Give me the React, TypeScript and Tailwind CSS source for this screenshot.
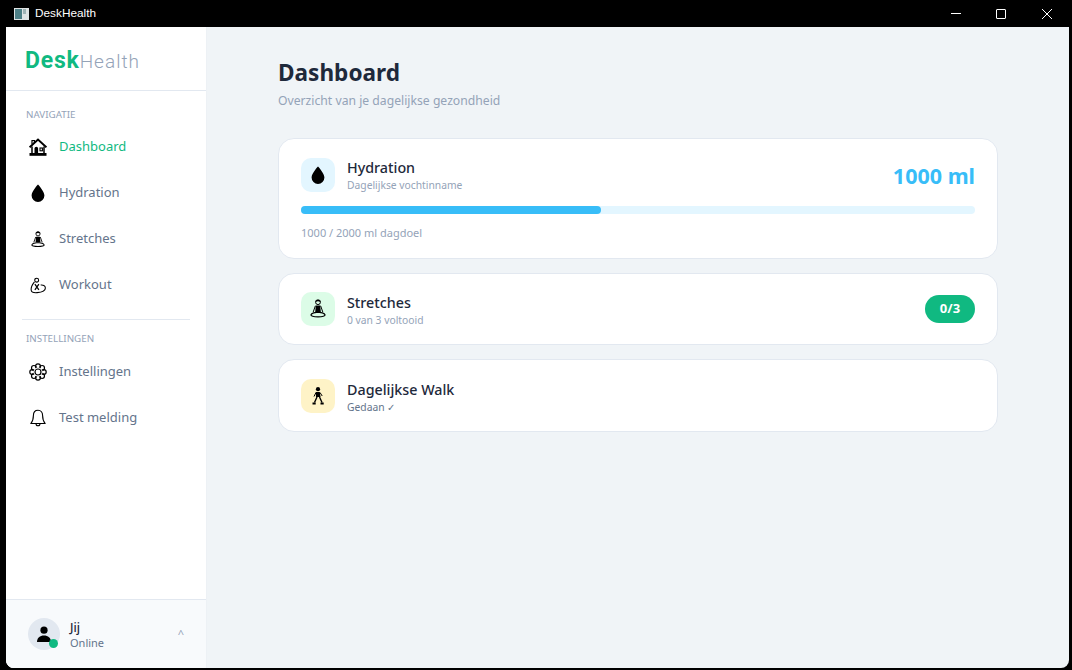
import React from 'react';

const Drop = ({ size = 18 }: { size?: number }) => (
  <svg width={size} height={size} viewBox="0 0 16 16">
    <path d="M8 .4C8 .4 2.300 6.400 2.300 10.200a5.700 5.700 0 0 0 11.400 0C13.700 6.400 8 .4 8 .4z" fill="#000" />
  </svg>
);

const House = () => (
  <svg width="18" height="18" viewBox="0 0 18 18">
    <path d="M3 6V2.500h2.400V4.500" fill="none" stroke="#000" strokeWidth="1.200" />
    <path d="M.6 9.300 9 1.500 17.400 9.300" fill="none" stroke="#000" strokeWidth="2" />
    <path d="M3 8.500V15.500M15 8.500V15.500" stroke="#000" strokeWidth="1.500" />
    <path d="M5.500 16V10.500a1.800 1.800 0 0 1 3.600 0V16z" fill="#000" />
    <rect x="11" y="10" width="2.400" height="2.800" fill="none" stroke="#000" strokeWidth="1.100" />
    <rect x="0.500" y="15" width="17" height="2.800" fill="#000" />
  </svg>
);

const Meditate = ({ size = 16 }: { size?: number }) => (
  <svg width={size} height={size * 1.2} viewBox="0 0 16 19.200">
    <circle cx="8" cy="3.200" r="2.400" fill="none" stroke="#000" strokeWidth="1" />
    <path d="M5.600 1.800C6 .6 10 .6 10.400 1.800L10.400 3C9 2 7 2 5.600 3z" fill="#000" />
    <path d="M5.800 6.500h4.400l.6 6.500H5.200z" fill="#000" />
    <path d="M5.400 6.800 3.200 13M10.600 6.800 12.800 13" stroke="#000" strokeWidth="1" fill="none" />
    <path d="M8 13.500C5 13 1.500 14.200 1 15.800c-.3 1.200 2.400 2 7 2s7.300-.8 7-2C14.500 14.200 11 13 8 13.500z" fill="none" stroke="#000" strokeWidth="1.200" />
  </svg>
);

const Workout = () => (
  <svg width="16" height="17" viewBox="0 0 18 18" fill="none" stroke="#000" strokeWidth="1.200">
    <circle cx="7.500" cy="3" r="2.200" />
    <path d="M5 5C3 7.500 1 11 1.300 14c.2 2.200 3 3.300 6.700 3 4.500-.3 9.300-1.700 9.300-5.200 0-2.500-2.800-3.800-5.300-3.300" />
    <path d="M5.500 7.500l4.500 6.500M10 7.500l-4.500 6.500" strokeWidth="1.400" />
  </svg>
);

const Flower = () => (
  <svg width="18" height="18" viewBox="0 0 18 18" fill="none" stroke="#000" strokeWidth="1.200">
    <circle cx="9" cy="3.200" r="2.400" />
    <circle cx="9" cy="14.800" r="2.400" />
    <circle cx="3.200" cy="9" r="2.400" />
    <circle cx="14.800" cy="9" r="2.400" />
    <circle cx="4.900" cy="4.900" r="2.400" />
    <circle cx="13.100" cy="4.900" r="2.400" />
    <circle cx="4.900" cy="13.100" r="2.400" />
    <circle cx="13.100" cy="13.100" r="2.400" />
    <circle cx="9" cy="9" r="4.500" fill="#fff" stroke="none" />
    <circle cx="9" cy="9" r="3" />
  </svg>
);

const Bell = () => (
  <svg width="16" height="18" viewBox="0 0 16 18" fill="none" stroke="#000" strokeWidth="1.100">
    <path d="M8 1.200c-3 0-4.600 2.300-4.600 5.300 0 3.500-.8 6-2.600 8h14.400c-1.800-2-2.600-4.500-2.600-8 0-3-1.600-5.300-4.600-5.300z" strokeLinejoin="round" />
    <path d="M6 14.800a2 2 0 0 0 4 0" />
  </svg>
);

const Walker = () => (
  <svg width="12" height="18" viewBox="0 0 12 18">
    <circle cx="6" cy="2.200" r="2.100" fill="#000" />
    <path d="M3.800 5h4l.7 5H4z" fill="#000" />
    <path d="M4 5.500 2 9.500M8 5.500l2.200 3.500" stroke="#000" strokeWidth="1" fill="none" />
    <path d="M5 10l-2.500 5.500M7.500 10l2.500 5.500" stroke="#000" strokeWidth="1.400" fill="none" />
    <path d="M.5 15.500h3.200v2H.5zM8.500 15.500h3.200v2H8.500z" fill="#000" />
  </svg>
);

const Person = () => (
  <svg width="14" height="16" viewBox="0 0 14 16">
    <circle cx="7" cy="4.200" r="3.600" fill="#000" />
    <path d="M0 16c0-4.200 3-6.500 7-6.500s7 2.300 7 6.500z" fill="#000" />
  </svg>
);

const NavItem = ({ icon, label, active }: { icon: React.ReactNode; label: string; active?: boolean }) => (
  <div className={`flex h-[46px] items-center text-[13px] ${active ? 'text-[#10b981]' : 'text-[#64748b]'}`}>
    <span className="flex w-[53px] justify-center pl-[22px] pr-[11px]">{icon}</span>
    <span>{label}</span>
  </div>
);

const SectionLabel = ({ children }: { children: React.ReactNode }) => (
  <div className="pl-[20px] text-[9.800px] leading-[14px] text-[#94a3b8]">{children}</div>
);

const IconBox = ({ bg, children }: { bg: string; children: React.ReactNode }) => (
  <div className={`flex h-[34px] w-[34px] items-center justify-center rounded-[10px] ${bg}`}>{children}</div>
);

const CardTitle = ({ title, sub, subClass = 'text-[#94a3b8]' }: { title: string; sub: string; subClass?: string }) => (
  <div className="ml-[12px] pt-[3px]">
    <div className="text-[14.300px] font-medium leading-[18px] text-[#1e293b]">{title}</div>
    <div className={`mt-[1px] text-[10.300px] leading-[14px] ${subClass}`}>{sub}</div>
  </div>
);

export default function App() {
  return (
    <div className="flex h-[670px] w-[1072px] flex-col overflow-hidden bg-black font-['Noto_Sans',sans-serif]">
      {/* title bar */}
      <div className="flex h-[27px] items-center text-white">
        <div className="ml-[14px] flex h-[12px] w-[15px] overflow-hidden bg-[#dfe3e4]">
          <div className="m-[1px] h-[10px] w-[7px] bg-[#4d7f86]" />
          <div className="my-[1px] h-[5px] w-[3px] bg-[#9fb3b5]" />
        </div>
        <span className="ml-[6px] font-['Liberation_Sans',sans-serif] text-[11.800px]">DeskHealth</span>
        <div className="ml-auto flex items-center">
          <span className="h-[1px] w-[10px] bg-white" />
          <span className="ml-[35px] h-[10px] w-[10px] rounded-[1px] border border-white" />
          <svg className="ml-[36px] mr-[20px]" width="10" height="10" viewBox="0 0 10 10">
            <path d="M0 0l10 10M10 0L0 10" stroke="#fff" strokeWidth="1" />
          </svg>
        </div>
      </div>

      <div className="ml-[6px] mr-[3px] flex h-[641px] overflow-hidden rounded-b-[8px] bg-[#f0f4f7]">
        {/* sidebar */}
        <aside className="flex w-[201px] shrink-0 flex-col border-r border-[#edf1f5] bg-white">
          <div className="flex h-[64px] shrink-0 items-baseline border-b border-[#e2e8f0] pl-[19px] pt-[17px] font-['Roboto',sans-serif]">
            <span className="text-[23px] font-bold tracking-[0.8px] text-[#10b981]">Desk</span>
            <span className="text-[19px] font-light tracking-[1px] text-[#94a3b8]">Health</span>
          </div>
          <div className="pt-[17px]">
            <SectionLabel>NAVIGATIE</SectionLabel>
          </div>
          <div className="mt-[2px]">
            <NavItem active icon={<House />} label="Dashboard" />
            <NavItem icon={<Drop />} label="Hydration" />
            <NavItem icon={<Meditate size={14} />} label="Stretches" />
            <NavItem icon={<Workout />} label="Workout" />
          </div>
          <div className="mx-[16px] mt-[11px] mb-[12px] h-[1px] bg-[#e2e8f0]" />
          <SectionLabel>INSTELLINGEN</SectionLabel>
          <div className="mt-[3px]">
            <NavItem icon={<Flower />} label="Instellingen" />
            <NavItem icon={<Bell />} label="Test melding" />
          </div>
          <div className="mt-auto flex h-[69px] items-center border-t border-[#e2e8f0] bg-[#f8fafc] px-[22px]">
            <div className="relative flex h-[32px] w-[32px] items-center justify-center rounded-full bg-[#e2e8f0]">
              <Person />
              <span className="absolute bottom-[2px] right-[2px] h-[9px] w-[9px] rounded-full bg-[#10b981]" />
            </div>
            <div className="ml-[10px] pt-[2px]">
              <div className="text-[12px] font-medium leading-[16px] text-[#1e293b]">Jij</div>
              <div className="text-[11px] leading-[14px] text-[#64748b]">Online</div>
            </div>
            <span className="ml-auto text-[11px] text-[#94a3b8]">^</span>
          </div>
        </aside>

        {/* main */}
        <main className="flex-1 px-[71px] pt-[30px]">
          <h1 className="text-[22.600px] font-bold leading-[32px] text-[#1e293b]">Dashboard</h1>
          <p className="mt-[4px] text-[12.200px] leading-[16px] text-[#94a3b8]">Overzicht van je dagelijkse gezondheid</p>

          <div className="mt-[29px] flex flex-col gap-[14px]">
            <div className="h-[121px] rounded-[16px] border border-[#e2e8f0] bg-white px-[22px] pt-[19px]">
              <div className="flex items-center">
                <IconBox bg="bg-[#e3f6ff]"><Drop /></IconBox>
                <div className="-mt-[3px]">
                  <CardTitle title="Hydration" sub="Dagelijkse vochtinname" />
                </div>
                <span className="ml-auto mt-[2px] text-[21.500px] font-bold text-[#38bdf8]">1000 ml</span>
              </div>
              <div className="mt-[14px] h-[8px] rounded-full bg-[#e3f6ff]">
                <div className="h-[8px] w-[300px] rounded-full bg-[#38bdf8]" />
              </div>
              <div className="mt-[11px] text-[11px] leading-[16px] text-[#94a3b8]">1000 / 2000 ml dagdoel</div>
            </div>

            <div className="flex h-[72px] items-center rounded-[16px] border border-[#e2e8f0] bg-white px-[22px]">
              <IconBox bg="bg-[#dcfce7]"><Meditate /></IconBox>
              <CardTitle title="Stretches" sub="0 van 3 voltooid" />
              <span className="ml-auto flex h-[28px] w-[50px] items-center justify-center rounded-full bg-[#10b981] text-[13px] font-bold text-white">0/3</span>
            </div>

            <div className="flex h-[73px] items-center rounded-[16px] border border-[#e2e8f0] bg-white px-[22px]">
              <IconBox bg="bg-[#fef3c7]"><Walker /></IconBox>
              <CardTitle title="Dagelijkse Walk" sub="Gedaan ✓" subClass="text-[#64748b]" />
            </div>
          </div>
        </main>
      </div>
    </div>
  );
}
